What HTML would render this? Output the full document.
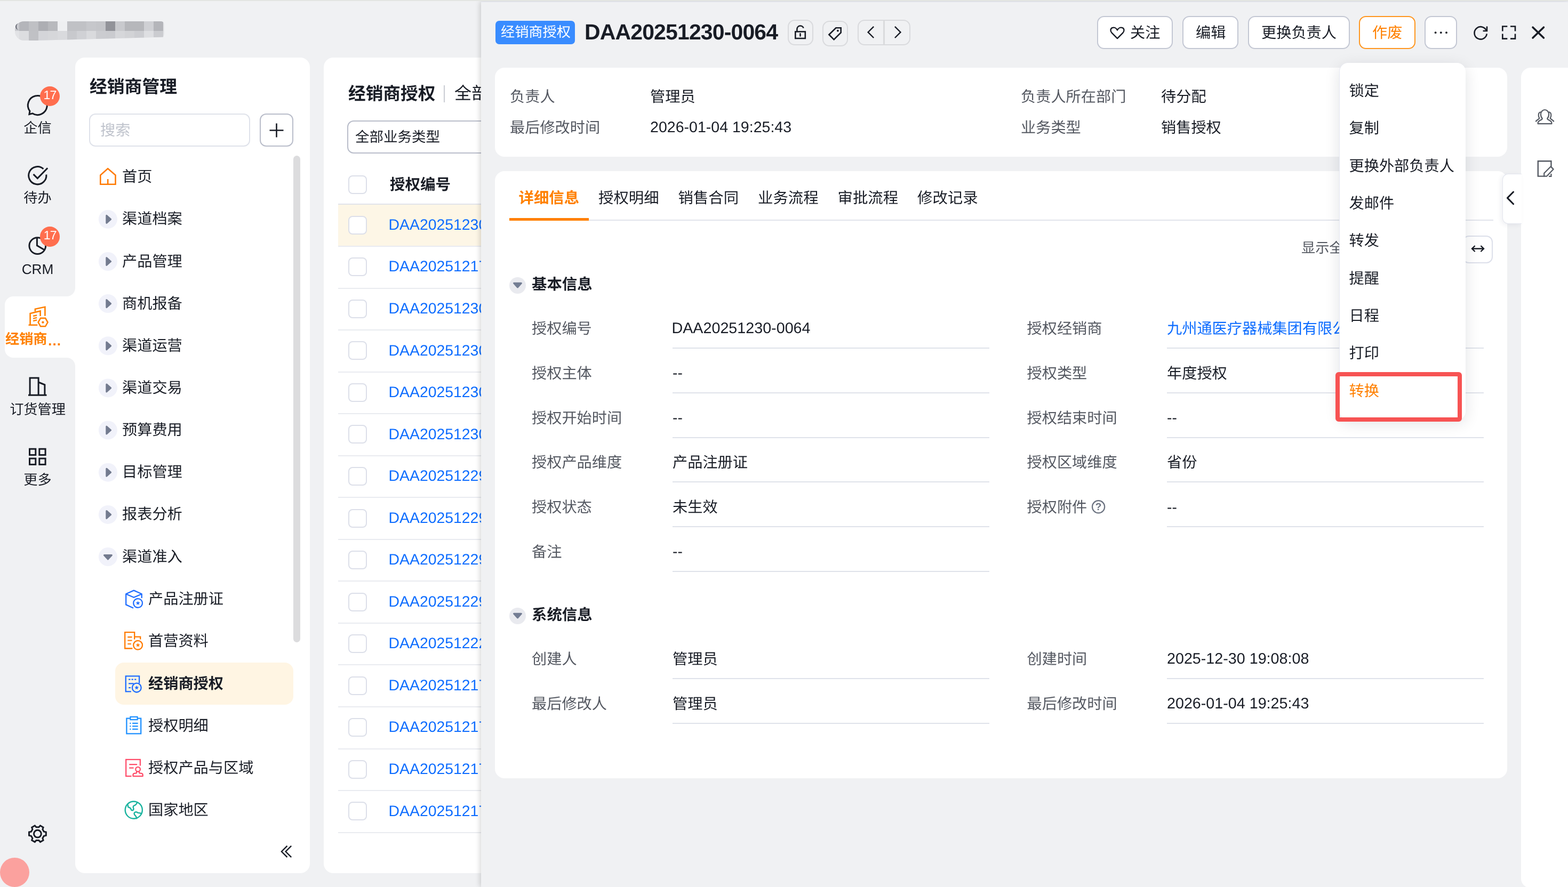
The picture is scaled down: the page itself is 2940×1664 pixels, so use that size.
<!DOCTYPE html>
<html lang="zh-CN"><head><meta charset="utf-8"><title>经销商授权</title>
<style>
*{box-sizing:border-box;margin:0;padding:0}
html,body{width:2940px;height:1664px;overflow:hidden}
body{background:#f0f1f3;font-family:"Liberation Sans","Noto Sans CJK SC",sans-serif;color:#181c25;position:relative;text-rendering:geometricPrecision;-webkit-font-smoothing:antialiased}
.a{position:absolute}
.t{position:absolute;white-space:nowrap}
svg{overflow:visible}
.cb{position:absolute;width:35px;height:35px;border:2px solid #dcdfe9;border-radius:8px;background:#fff}
.rl{position:absolute;left:634px;width:300px;height:2px;background:#e9ebf0}
.ul{position:absolute;height:2px;background:#dfe2ea}
.btn{position:absolute;top:30px;height:62px;border:2px solid #c3c7d3;border-radius:13px;background:#fff}
.ib{position:absolute;border:2px solid #d9dadd;border-radius:13px}
#root{position:absolute;left:0;top:0;width:2940px;height:1664px;will-change:transform}
</style></head><body><div id="root">

<div class="a" style="left:28px;top:40px;width:280px;height:36px;border-radius:17px 6px 14px 17px;overflow:hidden;background:#e4e5e8;clip-path:polygon(0 0,100% 0,100% 82%,14% 100%,0 100%)"><div class="a" style="left:8px;top:0;width:18px;height:18px;background:#b4b5ba"></div><div class="a" style="left:26px;top:0;width:18px;height:18px;background:#bfc0c4"></div><div class="a" style="left:44px;top:0;width:18px;height:18px;background:#adaeb3"></div><div class="a" style="left:62px;top:0;width:18px;height:18px;background:#b8b9bd"></div><div class="a" style="left:80px;top:0;width:18px;height:18px;background:#eeeff1"></div><div class="a" style="left:98px;top:0;width:18px;height:18px;background:#c0c1c5"></div><div class="a" style="left:116px;top:0;width:18px;height:18px;background:#c0c1c5"></div><div class="a" style="left:134px;top:0;width:18px;height:18px;background:#c6c7cb"></div><div class="a" style="left:152px;top:0;width:18px;height:18px;background:#c4c5c9"></div><div class="a" style="left:170px;top:0;width:18px;height:18px;background:#929399"></div><div class="a" style="left:188px;top:0;width:18px;height:18px;background:#c8c9cd"></div><div class="a" style="left:206px;top:0;width:18px;height:18px;background:#b6b7bb"></div><div class="a" style="left:224px;top:0;width:18px;height:18px;background:#b6b7bb"></div><div class="a" style="left:242px;top:0;width:18px;height:18px;background:#cfd0d4"></div><div class="a" style="left:260px;top:0;width:18px;height:18px;background:#b4b5ba"></div><div class="a" style="left:8px;top:18px;width:18px;height:18px;background:#dcdde0"></div><div class="a" style="left:26px;top:18px;width:18px;height:18px;background:#c0c1c5"></div><div class="a" style="left:44px;top:18px;width:18px;height:18px;background:#d4d5d9"></div><div class="a" style="left:62px;top:18px;width:18px;height:18px;background:#d6d7da"></div><div class="a" style="left:80px;top:18px;width:18px;height:18px;background:#d9dadd"></div><div class="a" style="left:98px;top:18px;width:18px;height:18px;background:#c8c9cd"></div><div class="a" style="left:116px;top:18px;width:18px;height:18px;background:#d0d1d5"></div><div class="a" style="left:134px;top:18px;width:18px;height:18px;background:#d9dadd"></div><div class="a" style="left:152px;top:18px;width:18px;height:18px;background:#cbccd0"></div><div class="a" style="left:170px;top:18px;width:18px;height:18px;background:#cacbcf"></div><div class="a" style="left:188px;top:18px;width:18px;height:18px;background:#d6d7da"></div><div class="a" style="left:206px;top:18px;width:18px;height:18px;background:#d2d3d6"></div><div class="a" style="left:224px;top:18px;width:18px;height:18px;background:#cccdd1"></div><div class="a" style="left:242px;top:18px;width:18px;height:18px;background:#dedfe2"></div><div class="a" style="left:260px;top:18px;width:18px;height:18px;background:#cbccd0"></div><div class="a" style="left:0;top:0;width:8px;height:18px;background:#c9cacf"></div><div class="a" style="left:0;top:18px;width:8px;height:18px;background:#e2e3e6"></div></div>
<div class="a" style="left:28.5px;top:43.5px;width:7px;height:12px;border-left:2.5px solid #3b3e4a;border-radius:9px 0 0 9px;opacity:.75"></div>
<div class="a" style="left:9px;top:556px;width:134px;height:115px;background:#fff;border-radius:16px 0 0 16px"></div>
<div class="a" style="left:125px;top:540px;width:16px;height:16px;background:radial-gradient(circle at 0 0,#f0f1f3 15.5px,#fff 16.5px)"></div>
<div class="a" style="left:125px;top:671px;width:16px;height:16px;background:radial-gradient(circle at 0 100%,#f0f1f3 15.5px,#fff 16.5px)"></div>
<svg class="a" style="left:0px;top:0px;" width="141" height="1664" viewBox="0 0 141 1664" fill="none"><path d="M55.9 208.3A18 18 0 1 1 60.8 212.8L54.9 214.5Z" stroke="#181c25" stroke-width="3" stroke-linejoin="miter"/><path d="M81.4 316.9A16.6 16.6 0 1 0 86.8 327.5" stroke="#181c25" stroke-width="3"/><path d="M62.6 326.9L70.3 334.6L89.2 315.3" stroke="#181c25" stroke-width="3"/><circle cx="70.3" cy="461.1" r="15.4" stroke="#181c25" stroke-width="3"/><path d="M69.4 445.5V460.6L83.2 468.8" stroke="#181c25" stroke-width="3"/></svg>
<div class="a" style="left:75.0px;top:161.6px;width:37.2px;height:37.2px;background:#ff6e4e;border-radius:50%;color:#fff;font-size:23px;line-height:33px;text-align:center;letter-spacing:-0.8px">17</div>
<div class="a" style="left:75.1px;top:425.4px;width:37.2px;height:37.2px;background:#ff6e4e;border-radius:50%;color:#fff;font-size:23px;line-height:33px;text-align:center;letter-spacing:-0.8px">17</div>
<div class="t" style="left:0px;top:222.0px;height:37px;line-height:37px;font-size:26.2px;color:#181c25;width:141px;text-align:center;">企信</div>
<div class="t" style="left:0px;top:353.0px;height:37px;line-height:37px;font-size:26.2px;color:#181c25;width:141px;text-align:center;">待办</div>
<div class="t" style="left:0px;top:486.7px;height:37px;line-height:37px;font-size:26.2px;color:#181c25;width:141px;text-align:center;">CRM</div>
<div class="t" style="left:10px;top:618.0px;height:37px;line-height:37px;font-size:26.2px;color:#ff8000;font-weight:bold;">经销商</div>
<div class="t" style="left:89px;top:620.6px;height:37px;line-height:37px;font-size:26.2px;color:#ff8000;font-weight:bold;">…</div>
<div class="t" style="left:0px;top:749.5px;height:37px;line-height:37px;font-size:26.2px;color:#181c25;width:141px;text-align:center;">订货管理</div>
<div class="t" style="left:0px;top:881.5px;height:37px;line-height:37px;font-size:26.2px;color:#181c25;width:141px;text-align:center;">更多</div>
<svg class="a" style="left:0px;top:0px;" width="141" height="1664" viewBox="0 0 141 1664" fill="none"><path d="M65.9 584.2L65.9 579.8L84.4 575.8L84.4 592.7" stroke="#ff8000" stroke-width="2.6"/><path d="M53.5 609.8L70.3 609.8M56.6 609.8L56.6 588.1L75.6 583.5L75.6 593.0" stroke="#ff8000" stroke-width="2.6"/><path d="M62.1 593.0L69.2 591.4M62.1 597.6L69.2 595.9M62.1 602.2L69.2 600.4" stroke="#ff8000" stroke-width="2.4"/><path d="M71.6 604.6L76.0 596.9L85.1 596.9L89.5 604.6L85.1 612.3L76.0 612.3Z" stroke="#ff8000" stroke-width="2.6" fill="#fff"/><circle cx="80.4" cy="604.6" r="2.2" fill="#ff8000"/><path d="M53.0 741.2L87.5 741.2M56.1 741.2L56.1 708.9L72.1 708.9L72.1 741.2M72.1 717.0L83.9 721.8L83.9 741.2" stroke="#181c25" stroke-width="3"/><rect x="55.5" y="842.2" width="11.3" height="11.3" stroke="#181c25" stroke-width="3"/><rect x="73.8" y="842.2" width="11.3" height="11.3" stroke="#181c25" stroke-width="3"/><rect x="55.5" y="860.1" width="11.3" height="11.3" stroke="#181c25" stroke-width="3"/><rect x="73.8" y="860.1" width="11.3" height="11.3" stroke="#181c25" stroke-width="3"/><path d="M82.3 1560.1L86.3 1561.0L86.3 1567.4L82.3 1568.3L79.9 1572.5L81.1 1576.3L75.5 1579.6L72.8 1576.6L68.0 1576.6L65.3 1579.6L59.7 1576.3L60.9 1572.5L58.5 1568.3L54.5 1567.4L54.5 1561.0L58.5 1560.1L60.9 1555.9L59.7 1552.1L65.3 1548.8L68.0 1551.8L72.8 1551.8L75.5 1548.8L81.1 1552.1L79.9 1555.9Z" stroke="#181c25" stroke-width="3" stroke-linejoin="miter"/><circle cx="70.4" cy="1564.2" r="6.9" stroke="#181c25" stroke-width="3"/></svg>
<div class="a" style="left:0px;top:1609px;width:55px;height:55px;background:#fba19e;border-radius:50%"></div>
<div class="a" style="left:141px;top:108px;width:440px;height:1530px;background:#fff;border-radius:18px"></div>
<div class="t" style="left:168px;top:139.7px;height:46px;line-height:46px;font-size:32.8px;color:#181c25;font-weight:bold;">经销商管理</div>
<div class="a" style="left:167px;top:213px;width:302px;height:62px;border:2px solid #dfe2ea;border-radius:12px;background:#fff"></div>
<div class="t" style="left:188px;top:224.6px;height:39px;line-height:39px;font-size:28.2px;color:#c0c4cd;">搜索</div>
<div class="a" style="left:487px;top:213px;width:63px;height:62px;border:2px solid #b9bdca;border-radius:12px;background:#fff"></div>
<svg class="a" style="left:487px;top:213px;" width="63" height="62" viewBox="0 0 63 62" fill="none"><path d="M18.5 31.5H44.5M31.5 18.5V44.5" stroke="#181c25" stroke-width="2.6"/></svg>
<div class="a" style="left:550px;top:292px;width:13px;height:913px;background:#dcdcde;border-radius:7px"></div>
<div class="a" style="left:216px;top:1243px;width:334px;height:79px;background:#fff5e3;border-radius:16px"></div>
<div class="t" style="left:229px;top:312.1px;height:39px;line-height:39px;font-size:28.2px;color:#181c25;">首页</div>
<div class="t" style="left:229px;top:391.4px;height:39px;line-height:39px;font-size:28.2px;color:#181c25;">渠道档案</div>
<div class="t" style="left:229px;top:470.5px;height:39px;line-height:39px;font-size:28.2px;color:#181c25;">产品管理</div>
<div class="t" style="left:229px;top:549.7px;height:39px;line-height:39px;font-size:28.2px;color:#181c25;">商机报备</div>
<div class="t" style="left:229px;top:628.8px;height:39px;line-height:39px;font-size:28.2px;color:#181c25;">渠道运营</div>
<div class="t" style="left:229px;top:708.0px;height:39px;line-height:39px;font-size:28.2px;color:#181c25;">渠道交易</div>
<div class="t" style="left:229px;top:787.1px;height:39px;line-height:39px;font-size:28.2px;color:#181c25;">预算费用</div>
<div class="t" style="left:229px;top:866.3px;height:39px;line-height:39px;font-size:28.2px;color:#181c25;">目标管理</div>
<div class="t" style="left:229px;top:945.4px;height:39px;line-height:39px;font-size:28.2px;color:#181c25;">报表分析</div>
<div class="t" style="left:229px;top:1024.6px;height:39px;line-height:39px;font-size:28.2px;color:#181c25;">渠道准入</div>
<div class="t" style="left:278px;top:1104.1px;height:39px;line-height:39px;font-size:28.2px;color:#181c25;">产品注册证</div>
<div class="t" style="left:278px;top:1183.1px;height:39px;line-height:39px;font-size:28.2px;color:#181c25;">首营资料</div>
<div class="t" style="left:278px;top:1262.6px;height:39px;line-height:39px;font-size:28.2px;color:#181c25;font-weight:bold;">经销商授权</div>
<div class="t" style="left:278px;top:1341.6px;height:39px;line-height:39px;font-size:28.2px;color:#181c25;">授权明细</div>
<div class="t" style="left:278px;top:1421.1px;height:39px;line-height:39px;font-size:28.2px;color:#181c25;">授权产品与区域</div>
<div class="t" style="left:278px;top:1500.1px;height:39px;line-height:39px;font-size:28.2px;color:#181c25;">国家地区</div>
<svg class="a" style="left:0px;top:0px;" width="600" height="1664" viewBox="0 0 600 1664" fill="none"><path d="M188.3 345.7V328.6L202.2 316.3L216.5 328.6V345.7Z" stroke="#ff7a00" stroke-width="2.6" stroke-linejoin="miter"/><path d="M202.2 336V345.5" stroke="#ff7a00" stroke-width="2.6"/><circle cx="202.4" cy="411.3" r="17.5" fill="#f1f2fa"/><path d="M199.8 404.3L207.6 411.3L199.8 418.3Z" fill="#737b8f" stroke="#737b8f" stroke-width="3" stroke-linejoin="round"/><circle cx="202.4" cy="490.5" r="17.5" fill="#f1f2fa"/><path d="M199.8 483.5L207.6 490.5L199.8 497.5Z" fill="#737b8f" stroke="#737b8f" stroke-width="3" stroke-linejoin="round"/><circle cx="202.4" cy="569.6" r="17.5" fill="#f1f2fa"/><path d="M199.8 562.6L207.6 569.6L199.8 576.6Z" fill="#737b8f" stroke="#737b8f" stroke-width="3" stroke-linejoin="round"/><circle cx="202.4" cy="648.8" r="17.5" fill="#f1f2fa"/><path d="M199.8 641.8L207.6 648.8L199.8 655.8Z" fill="#737b8f" stroke="#737b8f" stroke-width="3" stroke-linejoin="round"/><circle cx="202.4" cy="727.9" r="17.5" fill="#f1f2fa"/><path d="M199.8 720.9L207.6 727.9L199.8 734.9Z" fill="#737b8f" stroke="#737b8f" stroke-width="3" stroke-linejoin="round"/><circle cx="202.4" cy="807.0" r="17.5" fill="#f1f2fa"/><path d="M199.8 800.0L207.6 807.0L199.8 814.0Z" fill="#737b8f" stroke="#737b8f" stroke-width="3" stroke-linejoin="round"/><circle cx="202.4" cy="886.2" r="17.5" fill="#f1f2fa"/><path d="M199.8 879.2L207.6 886.2L199.8 893.2Z" fill="#737b8f" stroke="#737b8f" stroke-width="3" stroke-linejoin="round"/><circle cx="202.4" cy="965.4" r="17.5" fill="#f1f2fa"/><path d="M199.8 958.4L207.6 965.4L199.8 972.4Z" fill="#737b8f" stroke="#737b8f" stroke-width="3" stroke-linejoin="round"/><circle cx="202.4" cy="1044.5" r="17.5" fill="#f1f2fa"/><path d="M195.4 1041.5L209.4 1041.5L202.4 1049.1Z" fill="#737b8f" stroke="#737b8f" stroke-width="3" stroke-linejoin="round"/><path d="M250.9 1107.6L265.7 1114.2L250.9 1120.8L236.2 1114.2Z" stroke="#1f6dff" stroke-width="2.3" stroke-linejoin="round"/><path d="M236.2 1114.2L236.2 1134.4L250.1 1140.7M265.7 1114.2L265.7 1122.1" stroke="#1f6dff" stroke-width="2.3" stroke-linejoin="round"/><circle cx="258.6" cy="1131.5" r="8.4" stroke="#1f6dff" stroke-width="2.3" fill="#fff"/><path d="M258.6 1127.2L259.7 1130.0L262.7 1130.1L260.3 1132.0L261.1 1135.0L258.6 1133.3L256.1 1135.0L256.9 1132.0L254.5 1130.1L257.6 1130.0Z" fill="#1f6dff"/><path d="M248.4 1216.5L234.2 1216.5L234.2 1186.2L252.2 1186.2L252.2 1199.6M252.2 1194.6L263.2 1194.6L263.2 1199.6" stroke="#ff7a00" stroke-width="2.3"/><path d="M239.3 1195.1L247.6 1195.1M239.3 1201.5L247.6 1201.5M239.3 1208.0L245.9 1208.0" stroke="#ff7a00" stroke-width="2.2"/><circle cx="258.6" cy="1210.3" r="8.4" stroke="#ff7a00" stroke-width="2.3" fill="#fff"/><path d="M258.6 1206.0L259.7 1208.8L262.7 1208.9L260.3 1210.8L261.1 1213.7L258.6 1212.1L256.1 1213.7L256.9 1210.8L254.5 1208.9L257.6 1208.8Z" fill="#ff7a00"/><path d="M245.9 1297.4L235.8 1297.4L235.8 1268.4L261.1 1268.4L261.1 1281.8" stroke="#1f6dff" stroke-width="2.3"/><path d="M241.1 1274.7L256.9 1274.7" stroke="#1f6dff" stroke-width="2.2" stroke-dasharray="3.3 2.2"/><path d="M241.1 1282.4L250.8 1282.4M241.1 1290.1L245.1 1290.1" stroke="#1f6dff" stroke-width="2.2"/><circle cx="256.3" cy="1290.1" r="8.4" stroke="#1f6dff" stroke-width="2.3" fill="#fff5e3"/><path d="M256.3 1285.8L257.3 1288.6L260.4 1288.8L258.0 1290.7L258.8 1293.6L256.3 1291.9L253.7 1293.6L254.5 1290.7L252.2 1288.8L255.2 1288.6Z" fill="#1f6dff"/><path d="M243.7 1347.7L237.4 1347.7L237.4 1376.3L264.2 1376.3L264.2 1347.7L257.8 1347.7" stroke="#1e90ff" stroke-width="2.3"/><rect x="244.4" y="1344.8" width="13.2" height="5.3" stroke="#1e90ff" stroke-width="2.2"/><path d="M243.3 1356.9L245.5 1356.9M248.1 1356.9L258.7 1356.9" stroke="#1e90ff" stroke-width="2.2"/><path d="M243.3 1362.4L245.5 1362.4M248.1 1362.4L258.7 1362.4" stroke="#1e90ff" stroke-width="2.2"/><path d="M243.3 1367.9L245.5 1367.9M248.1 1367.9L258.7 1367.9" stroke="#1e90ff" stroke-width="2.2"/><path d="M246.5 1456.1L236.2 1456.1L236.2 1424.9L262.9 1424.9L262.9 1436.6" stroke="#ff4d6a" stroke-width="2.3"/><path d="M242.2 1434.1L257.1 1434.1M242.2 1440.6L250.6 1440.6" stroke="#ff4d6a" stroke-width="2.2"/><circle cx="258.6" cy="1443.2" r="4.3" stroke="#ff4d6a" stroke-width="2.3"/><path d="M256.3 1447.3L255.8 1450.4L251.9 1450.8Q249.5 1451.2 249.5 1453.8L249.5 1456.1L267.7 1456.1L267.7 1453.8Q267.7 1451.2 265.2 1450.8L261.4 1450.4L260.8 1447.3" stroke="#ff4d6a" stroke-width="2.3" stroke-linejoin="round"/><circle cx="250.8" cy="1519.6" r="16.1" stroke="#19b39f" stroke-width="2.4"/><path d="M239.1 1509.4C241.2 1510.6 238.9 1513.4 240.8 1514.3C243.5 1515.3 244.9 1515.7 245.6 1518.0C246.3 1521.3 250.5 1520.8 250.5 1517.6C250.2 1514.8 248.2 1512.5 251.4 1511.3C254.7 1510.6 256.1 1508.3 257.3 1505.3" stroke="#19b39f" stroke-width="2.4" stroke-linecap="round"/><path d="M265.1 1526.7C263.0 1524.5 260.2 1525.0 258.4 1524.8C256.5 1522.7 253.7 1522.7 252.1 1524.5C250.5 1527.3 252.8 1529.6 254.5 1531.0C255.6 1532.4 256.1 1533.8 256.1 1535.4" stroke="#19b39f" stroke-width="2.4" stroke-linecap="round"/><path d="M538.5 1586.8L527.9 1597.5L538.5 1608.2M546.2 1586.8L535.6 1597.5L546.2 1608.2" stroke="#181c25" stroke-width="2.4"/></svg>
<div class="a" style="left:607px;top:108px;width:400px;height:1530px;background:#fff;border-radius:18px 0 0 18px"></div>
<div class="t" style="left:653px;top:152.7px;height:46px;line-height:46px;font-size:32.7px;color:#181c25;font-weight:bold;">经销商授权</div>
<div class="a" style="left:832px;top:160px;width:2px;height:32px;background:#c9ccd3"></div>
<div class="t" style="left:852px;top:153.1px;height:45px;line-height:45px;font-size:32px;color:#181c25;">全部</div>
<div class="a" style="left:651px;top:226px;width:320px;height:62px;border:2px solid #b9bdca;border-radius:12px;background:#fff"></div>
<div class="t" style="left:666px;top:238.5px;height:37px;line-height:37px;font-size:26.5px;color:#181c25;">全部业务类型</div>
<div class="cb" style="left:653px;top:329px"></div>
<div class="t" style="left:731px;top:326.6px;height:40px;line-height:40px;font-size:28.5px;color:#181c25;font-weight:bold;">授权编号</div>
<div class="a" style="left:634px;top:382px;width:300px;height:2px;background:#e1e3ea"></div>
<div class="a" style="left:634px;top:384px;width:300px;height:78px;background:#fdf6e6"></div>
<div class="cb" style="left:653px;top:404.6px"></div>
<div class="t" style="left:728.5px;top:401.8px;height:40px;line-height:40px;font-size:28.4px;color:#0c6cff;">DAA20251230-0064</div>
<div class="rl" style="top:460.9px"></div>
<div class="cb" style="left:653px;top:483.2px"></div>
<div class="t" style="left:728.5px;top:480.4px;height:40px;line-height:40px;font-size:28.4px;color:#0c6cff;">DAA20251217-0064</div>
<div class="rl" style="top:539.5px"></div>
<div class="cb" style="left:653px;top:561.7px"></div>
<div class="t" style="left:728.5px;top:558.9px;height:40px;line-height:40px;font-size:28.4px;color:#0c6cff;">DAA20251230-0064</div>
<div class="rl" style="top:618.0px"></div>
<div class="cb" style="left:653px;top:640.2px"></div>
<div class="t" style="left:728.5px;top:637.5px;height:40px;line-height:40px;font-size:28.4px;color:#0c6cff;">DAA20251230-0064</div>
<div class="rl" style="top:696.5px"></div>
<div class="cb" style="left:653px;top:718.8px"></div>
<div class="t" style="left:728.5px;top:716.0px;height:40px;line-height:40px;font-size:28.4px;color:#0c6cff;">DAA20251230-0064</div>
<div class="rl" style="top:775.1px"></div>
<div class="cb" style="left:653px;top:797.4px"></div>
<div class="t" style="left:728.5px;top:794.6px;height:40px;line-height:40px;font-size:28.4px;color:#0c6cff;">DAA20251230-0064</div>
<div class="rl" style="top:853.6px"></div>
<div class="cb" style="left:653px;top:875.9px"></div>
<div class="t" style="left:728.5px;top:873.1px;height:40px;line-height:40px;font-size:28.4px;color:#0c6cff;">DAA20251229-0064</div>
<div class="rl" style="top:932.2px"></div>
<div class="cb" style="left:653px;top:954.5px"></div>
<div class="t" style="left:728.5px;top:951.7px;height:40px;line-height:40px;font-size:28.4px;color:#0c6cff;">DAA20251229-0064</div>
<div class="rl" style="top:1010.8px"></div>
<div class="cb" style="left:653px;top:1033.0px"></div>
<div class="t" style="left:728.5px;top:1030.2px;height:40px;line-height:40px;font-size:28.4px;color:#0c6cff;">DAA20251229-0064</div>
<div class="rl" style="top:1089.3px"></div>
<div class="cb" style="left:653px;top:1111.5px"></div>
<div class="t" style="left:728.5px;top:1108.8px;height:40px;line-height:40px;font-size:28.4px;color:#0c6cff;">DAA20251229-0064</div>
<div class="rl" style="top:1167.8px"></div>
<div class="cb" style="left:653px;top:1190.1px"></div>
<div class="t" style="left:728.5px;top:1187.3px;height:40px;line-height:40px;font-size:28.4px;color:#0c6cff;">DAA20251222-0064</div>
<div class="rl" style="top:1246.4px"></div>
<div class="cb" style="left:653px;top:1268.7px"></div>
<div class="t" style="left:728.5px;top:1265.9px;height:40px;line-height:40px;font-size:28.4px;color:#0c6cff;">DAA20251217-0064</div>
<div class="rl" style="top:1325.0px"></div>
<div class="cb" style="left:653px;top:1347.2px"></div>
<div class="t" style="left:728.5px;top:1344.4px;height:40px;line-height:40px;font-size:28.4px;color:#0c6cff;">DAA20251217-0064</div>
<div class="rl" style="top:1403.5px"></div>
<div class="cb" style="left:653px;top:1425.8px"></div>
<div class="t" style="left:728.5px;top:1423.0px;height:40px;line-height:40px;font-size:28.4px;color:#0c6cff;">DAA20251217-0064</div>
<div class="rl" style="top:1482.0px"></div>
<div class="cb" style="left:653px;top:1504.3px"></div>
<div class="t" style="left:728.5px;top:1501.5px;height:40px;line-height:40px;font-size:28.4px;color:#0c6cff;">DAA20251217-0064</div>
<div class="rl" style="top:1560.6px"></div>
<div class="a" style="left:902px;top:3px;width:2038px;height:1661px;background:#f0f1f3;box-shadow:-2px 0 9px rgba(0,0,0,.17);border-top:1px solid #e1e2ee"></div>
<div class="a" style="left:929px;top:39px;width:149px;height:44px;background:#398cff;border-radius:7px"></div>
<div class="t" style="left:939px;top:41.5px;height:37px;line-height:37px;font-size:26.2px;color:#fff;">经销商授权</div>
<div class="t" style="left:1096px;top:32.2px;height:57px;line-height:57px;font-size:41px;color:#181c25;font-weight:bold;letter-spacing:-0.87px;">DAA20251230-0064</div>
<div class="ib" style="left:1477px;top:37px;width:48px;height:48px"></div>
<div class="ib" style="left:1542px;top:39px;width:48px;height:48px"></div>
<div class="ib" style="left:1608px;top:37px;width:99px;height:48px"></div>
<div class="a" style="left:1656.2px;top:38px;width:2.6px;height:46px;background:#d9dadd"></div>
<div class="btn" style="left:2057px;width:142px;"></div>
<div class="btn" style="left:2217px;width:105px;"></div>
<div class="btn" style="left:2340px;width:191px;"></div>
<div class="btn" style="left:2548px;width:106px;border-color:#ff961f;"></div>
<div class="btn" style="left:2671px;width:61px;"></div>
<div class="t" style="left:2119px;top:42.1px;height:39px;line-height:39px;font-size:28.2px;color:#181c25;">关注</div>
<div class="t" style="left:2242px;top:42.1px;height:39px;line-height:39px;font-size:28.2px;color:#181c25;">编辑</div>
<div class="t" style="left:2365px;top:42.1px;height:39px;line-height:39px;font-size:28.2px;color:#181c25;">更换负责人</div>
<div class="t" style="left:2573px;top:42.1px;height:39px;line-height:39px;font-size:28.2px;color:#ff8000;">作废</div>
<div class="a" style="left:928px;top:127px;width:1898px;height:167px;background:#fff;border-radius:18px"></div>
<div class="t" style="left:956px;top:161.6px;height:39px;line-height:39px;font-size:28.2px;color:#545861;">负责人</div>
<div class="t" style="left:1219px;top:161.6px;height:39px;line-height:39px;font-size:28.2px;color:#181c25;">管理员</div>
<div class="t" style="left:956px;top:220.1px;height:39px;line-height:39px;font-size:28.2px;color:#545861;">最后修改时间</div>
<div class="t" style="left:1219px;top:219.2px;height:40px;line-height:40px;font-size:28.55px;color:#181c25;">2026-01-04 19:25:43</div>
<div class="t" style="left:1914px;top:161.6px;height:39px;line-height:39px;font-size:28.2px;color:#545861;">负责人所在部门</div>
<div class="t" style="left:2177px;top:161.6px;height:39px;line-height:39px;font-size:28.2px;color:#181c25;">待分配</div>
<div class="t" style="left:1914px;top:220.1px;height:39px;line-height:39px;font-size:28.2px;color:#545861;">业务类型</div>
<div class="t" style="left:2177px;top:220.1px;height:39px;line-height:39px;font-size:28.2px;color:#181c25;">销售授权</div>
<div class="a" style="left:928px;top:321px;width:1898px;height:1139px;background:#fff;border-radius:18px"></div>
<div class="t" style="left:972.5px;top:351.6px;height:40px;line-height:40px;font-size:28.4px;color:#ff8000;font-weight:bold;">详细信息</div>
<div class="t" style="left:1122.0px;top:351.6px;height:40px;line-height:40px;font-size:28.4px;color:#181c25;">授权明细</div>
<div class="t" style="left:1271.5px;top:351.6px;height:40px;line-height:40px;font-size:28.4px;color:#181c25;">销售合同</div>
<div class="t" style="left:1421.0px;top:351.6px;height:40px;line-height:40px;font-size:28.4px;color:#181c25;">业务流程</div>
<div class="t" style="left:1570.5px;top:351.6px;height:40px;line-height:40px;font-size:28.4px;color:#181c25;">审批流程</div>
<div class="t" style="left:1720.0px;top:351.6px;height:40px;line-height:40px;font-size:28.4px;color:#181c25;">修改记录</div>
<div class="a" style="left:955px;top:412px;width:1845px;height:2px;background:#e1e4eb"></div>
<div class="a" style="left:955px;top:409px;width:149px;height:5px;background:#ff8000"></div>
<div class="t" style="left:2440px;top:447.3px;height:37px;line-height:37px;font-size:26.2px;color:#545861;">显示全部信息</div>
<div class="a" style="left:2742px;top:442px;width:57px;height:52px;border:2px solid #dcdfea;border-radius:12px;background:#fff"></div>
<div class="a" style="left:955px;top:519.9px;width:31px;height:31px;background:#e9eaef;border-radius:50%"></div>
<div class="t" style="left:997px;top:514.0px;height:40px;line-height:40px;font-size:28.4px;color:#181c25;font-weight:bold;">基本信息</div>
<div class="a" style="left:955px;top:1139.9px;width:31px;height:31px;background:#e9eaef;border-radius:50%"></div>
<div class="t" style="left:997px;top:1134.0px;height:40px;line-height:40px;font-size:28.4px;color:#181c25;font-weight:bold;">系统信息</div>
<div class="t" style="left:997px;top:597.1px;height:39px;line-height:39px;font-size:28.2px;color:#545861;">授权编号</div>
<div class="t" style="left:1259.5px;top:596.2px;height:40px;line-height:40px;font-size:28.7px;color:#181c25;">DAA20251230-0064</div>
<div class="ul" style="left:1261px;top:652.3px;width:594px"></div>
<div class="t" style="left:997px;top:680.8px;height:39px;line-height:39px;font-size:28.2px;color:#545861;">授权主体</div>
<div class="t" style="left:1261px;top:680.4px;height:39px;line-height:39px;font-size:28.2px;color:#181c25;">--</div>
<div class="ul" style="left:1261px;top:736.0px;width:594px"></div>
<div class="t" style="left:997px;top:764.5px;height:39px;line-height:39px;font-size:28.2px;color:#545861;">授权开始时间</div>
<div class="t" style="left:1261px;top:764.1px;height:39px;line-height:39px;font-size:28.2px;color:#181c25;">--</div>
<div class="ul" style="left:1261px;top:819.7px;width:594px"></div>
<div class="t" style="left:997px;top:848.2px;height:39px;line-height:39px;font-size:28.2px;color:#545861;">授权产品维度</div>
<div class="t" style="left:1261px;top:848.2px;height:39px;line-height:39px;font-size:28.2px;color:#181c25;">产品注册证</div>
<div class="ul" style="left:1261px;top:903.4px;width:594px"></div>
<div class="t" style="left:997px;top:931.9px;height:39px;line-height:39px;font-size:28.2px;color:#545861;">授权状态</div>
<div class="t" style="left:1261px;top:931.9px;height:39px;line-height:39px;font-size:28.2px;color:#181c25;">未生效</div>
<div class="ul" style="left:1261px;top:987.1px;width:594px"></div>
<div class="t" style="left:997px;top:1015.6px;height:39px;line-height:39px;font-size:28.2px;color:#545861;">备注</div>
<div class="t" style="left:1261px;top:1015.2px;height:39px;line-height:39px;font-size:28.2px;color:#181c25;">--</div>
<div class="ul" style="left:1261px;top:1070.8px;width:594px"></div>
<div class="t" style="left:1925.5px;top:597.1px;height:39px;line-height:39px;font-size:28.2px;color:#545861;">授权经销商</div>
<div class="t" style="left:2188px;top:597.1px;height:39px;line-height:39px;font-size:28.2px;color:#0c6cff;">九州通医疗器械集团有限公司</div>
<div class="ul" style="left:2188px;top:652.3px;width:594px"></div>
<div class="t" style="left:1925.5px;top:680.8px;height:39px;line-height:39px;font-size:28.2px;color:#545861;">授权类型</div>
<div class="t" style="left:2188px;top:680.8px;height:39px;line-height:39px;font-size:28.2px;color:#181c25;">年度授权</div>
<div class="ul" style="left:2188px;top:736.0px;width:594px"></div>
<div class="t" style="left:1925.5px;top:764.5px;height:39px;line-height:39px;font-size:28.2px;color:#545861;">授权结束时间</div>
<div class="t" style="left:2188px;top:764.1px;height:39px;line-height:39px;font-size:28.2px;color:#181c25;">--</div>
<div class="ul" style="left:2188px;top:819.7px;width:594px"></div>
<div class="t" style="left:1925.5px;top:848.2px;height:39px;line-height:39px;font-size:28.2px;color:#545861;">授权区域维度</div>
<div class="t" style="left:2188px;top:848.2px;height:39px;line-height:39px;font-size:28.2px;color:#181c25;">省份</div>
<div class="ul" style="left:2188px;top:903.4px;width:594px"></div>
<div class="t" style="left:1925.5px;top:931.9px;height:39px;line-height:39px;font-size:28.2px;color:#545861;">授权附件</div>
<div class="t" style="left:2188px;top:931.5px;height:39px;line-height:39px;font-size:28.2px;color:#181c25;">--</div>
<div class="ul" style="left:2188px;top:987.1px;width:594px"></div>
<div class="t" style="left:2052.6px;top:938.0px;height:27px;line-height:27px;font-size:19px;color:#6b7280;font-weight:bold;width:14px;text-align:center;">?</div>
<div class="t" style="left:997px;top:1217.1px;height:39px;line-height:39px;font-size:28.2px;color:#545861;">创建人</div>
<div class="t" style="left:1261px;top:1217.1px;height:39px;line-height:39px;font-size:28.2px;color:#181c25;">管理员</div>
<div class="ul" style="left:1261px;top:1272.3px;width:594px"></div>
<div class="t" style="left:997px;top:1300.8px;height:39px;line-height:39px;font-size:28.2px;color:#545861;">最后修改人</div>
<div class="t" style="left:1261px;top:1300.8px;height:39px;line-height:39px;font-size:28.2px;color:#181c25;">管理员</div>
<div class="ul" style="left:1261px;top:1356.0px;width:594px"></div>
<div class="t" style="left:1925.5px;top:1217.1px;height:39px;line-height:39px;font-size:28.2px;color:#545861;">创建时间</div>
<div class="t" style="left:2188px;top:1216.2px;height:40px;line-height:40px;font-size:28.7px;color:#181c25;">2025-12-30 19:08:08</div>
<div class="ul" style="left:2188px;top:1272.3px;width:594px"></div>
<div class="t" style="left:1925.5px;top:1300.8px;height:39px;line-height:39px;font-size:28.2px;color:#545861;">最后修改时间</div>
<div class="t" style="left:2188px;top:1299.9px;height:40px;line-height:40px;font-size:28.7px;color:#181c25;">2026-01-04 19:25:43</div>
<div class="ul" style="left:2188px;top:1356.0px;width:594px"></div>
<div class="a" style="left:2852px;top:127px;width:110px;height:1539px;background:#fff;border-radius:18px"></div>
<div class="a" style="left:2817px;top:326px;width:36px;height:94px;background:#fff;border:1px solid #e4e6ee;border-right:none;border-radius:11px 0 0 11px;box-shadow:-3px 2px 8px rgba(30,40,80,.07)"></div>
<svg class="a" style="left:0px;top:0px;" width="2940" height="1664" viewBox="0 0 2940 1664" fill="none"><rect x="1491.3" y="59.4" width="18.5" height="12.6" stroke="#181c25" stroke-width="2.6"/><path d="M1494.4 59V54.6A6.3 6.3 0 0 1 1506.6 52.6" stroke="#181c25" stroke-width="2.6"/><path d="M1500.5 63.2V67.4" stroke="#181c25" stroke-width="2.6" stroke-linecap="round"/><path d="M1554.4 65L1567.4 52.2H1576.7V61.2L1563.6 74.2Z" stroke="#181c25" stroke-width="2.6" stroke-linejoin="miter"/><circle cx="1570.9" cy="57.7" r="1.9" fill="#181c25"/><path d="M1638.2 49.8L1627.6 60.4L1638.2 71M1677.9 49.8L1688.5 60.4L1677.9 71" stroke="#181c25" stroke-width="2.4"/><path d="M2095 72.2L2084.6 61.6C2081.4 58.2 2082 53.6 2085.4 52.2C2089 50.8 2093 52.4 2095 56.6C2097 52.4 2101 50.8 2104.6 52.2C2108 53.6 2108.6 58.2 2105.4 61.6Z" stroke="#181c25" stroke-width="2.4" stroke-linejoin="round"/><circle cx="2691.6" cy="61.2" r="1.9" fill="#181c25"/><circle cx="2701.8" cy="61.2" r="1.9" fill="#181c25"/><circle cx="2712" cy="61.2" r="1.9" fill="#181c25"/><path d="M2787.3 58.2A11.7 11.7 0 1 0 2787.8 63.4" stroke="#181c25" stroke-width="2.6"/><path d="M2788 49.6V58H2780.6" stroke="#181c25" stroke-width="2.6"/><path d="M2817.3 58.5V49.5H2826.3M2832 49.5H2841V58.5M2841 63.599999999999994V72.6H2832M2826.3 72.6H2817.3V63.599999999999994" stroke="#181c25" stroke-width="2.6"/><path d="M2874 51.2L2894.4 71M2894.4 51.2L2874 71" stroke="#181c25" stroke-width="3.6" stroke-linecap="round"/><path d="M2760.5 466.5H2781.5M2765.6 461L2760 466.5L2765.6 472M2776.4 461L2782 466.5L2776.4 472" stroke="#181c25" stroke-width="2.4"/><path d="M963.6 531.2H977.4L970.5 539.0Z" fill="#737d93" stroke="#737d93" stroke-width="3" stroke-linejoin="round"/><path d="M963.6 1151.2H977.4L970.5 1159.0Z" fill="#737d93" stroke="#737d93" stroke-width="3" stroke-linejoin="round"/><circle cx="2059.6" cy="950.8" r="11.6" stroke="#6b7280" stroke-width="2.2"/><path d="M2837.6 360L2826.4 371.4L2837.6 382.8" stroke="#181c25" stroke-width="3" stroke-linecap="round" stroke-linejoin="round"/><path d="M2896.5 206A7.6 8.6 0 0 1 2904.1 214.6C2904.1 218.6 2902.6 221 2901.2 222.4C2901.2 225.4 2909.4 225.6 2909.4 231V232.2H2883.6V231C2883.6 225.6 2891.8 225.4 2891.8 222.4C2890.4 221 2888.9 218.6 2888.9 214.6A7.6 8.6 0 0 1 2896.5 206Z" stroke="#555a63" stroke-width="2.2" stroke-linejoin="round"/><path d="M2889 210C2885.6 210.6 2884.4 214 2884.8 217.4C2885 219.4 2885.8 220.8 2886.4 221.8C2886 223.6 2880.6 224.8 2879.6 228.4" stroke="#555a63" stroke-width="2.2"/><path d="M2904 210C2907.4 210.6 2908.6 214 2908.2 217.4C2908 219.4 2907.2 220.8 2906.6 221.8C2907 223.6 2912.4 224.8 2913.4 228.4" stroke="#555a63" stroke-width="2.2"/><path d="M2896 330.6H2883.8V302.2H2908.4V314" stroke="#555a63" stroke-width="2.4"/><path d="M2895.2 330.6V325L2907.6 312.4L2912.6 317.4L2900.2 330.6Z" stroke="#555a63" stroke-width="2.2" stroke-linejoin="round"/><path d="M2908.4 326V330.8H2904" stroke="#555a63" stroke-width="2.2"/></svg>
<div class="a" style="left:2511px;top:118px;width:237px;height:670px;background:#fff;border-radius:16px;border-left:1px solid #e6e8f3;box-shadow:0 6px 28px rgba(20,25,45,.12)"></div>
<div class="t" style="left:2529.5px;top:151.1px;height:39px;line-height:39px;font-size:28.2px;color:#181c25;">锁定</div>
<div class="t" style="left:2529.5px;top:221.4px;height:39px;line-height:39px;font-size:28.2px;color:#181c25;">复制</div>
<div class="t" style="left:2529.5px;top:291.7px;height:39px;line-height:39px;font-size:28.2px;color:#181c25;">更换外部负责人</div>
<div class="t" style="left:2529.5px;top:362.0px;height:39px;line-height:39px;font-size:28.2px;color:#181c25;">发邮件</div>
<div class="t" style="left:2529.5px;top:432.3px;height:39px;line-height:39px;font-size:28.2px;color:#181c25;">转发</div>
<div class="t" style="left:2529.5px;top:502.6px;height:39px;line-height:39px;font-size:28.2px;color:#181c25;">提醒</div>
<div class="t" style="left:2529.5px;top:572.9px;height:39px;line-height:39px;font-size:28.2px;color:#181c25;">日程</div>
<div class="t" style="left:2529.5px;top:643.2px;height:39px;line-height:39px;font-size:28.2px;color:#181c25;">打印</div>
<div class="t" style="left:2529.5px;top:713.5px;height:39px;line-height:39px;font-size:28.2px;color:#ff8000;">转换</div>
<div class="a" style="left:2504px;top:698px;width:237px;height:93px;border:8px solid #f75353;border-radius:6px"></div>
<div class="a" style="left:0px;top:0px;width:2940px;height:2px;background:#e3e5e2"></div>
</div></body></html>
